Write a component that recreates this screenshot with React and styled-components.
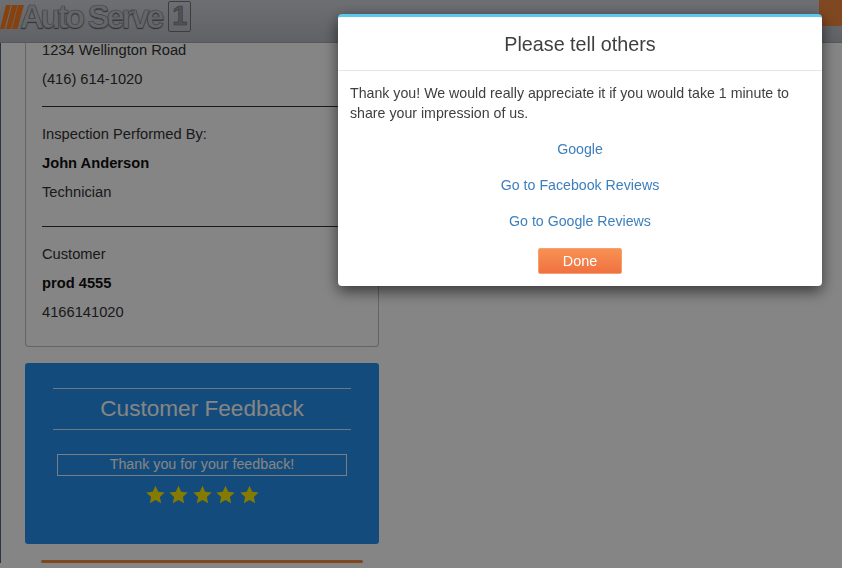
import React from "react";
import styled, { createGlobalStyle } from "styled-components";

const GlobalStyle = createGlobalStyle`
  html, body {
    margin: 0;
    height: 100%;
    overflow: hidden;
    background: #fff;
    font-family: "Liberation Sans", Arial, sans-serif;
  }
  * {
    box-sizing: border-box;
  }
`;

const Shell = styled.div`
  height: 568px;
  overflow: hidden;
  display: flex;
  flex-direction: column;
`;

const Header = styled.header`
  flex: 0 0 43px;
  display: flex;
  justify-content: space-between;
  align-items: flex-start;
  background: linear-gradient(#d3d5db, #b8bbc4);
  border-bottom: 1px solid #a8a8a8;
`;

const Logo = styled.div`
  display: flex;
  align-items: center;
  height: 32px;
  padding-top: 2px;
`;

const LogoText = styled.span`
  font-size: 33px;
  font-weight: 700;
  letter-spacing: -3.3px;
  line-height: 32px;
  margin: 0 7px 0 -4px;
  color: #c2c4c9;
  -webkit-text-stroke: 0.6px #7d7f85;
  text-shadow: 0 1px 1px #55575c;
  white-space: nowrap;
`;

const LogoBadge = styled.span`
  width: 23px;
  height: 31px;
  margin-top: -1px;
  border: 1.5px solid #74767c;
  border-radius: 2px;
  font-size: 27px;
  font-weight: 700;
  line-height: 29px;
  text-align: center;
  color: #9a9ca2;
  -webkit-text-stroke: 0.6px #6c6e74;
`;

const HeaderTab = styled.div`
  width: 23px;
  height: 26px;
  background: #f48a3e;
`;

const Content = styled.main`
  flex: 1;
  display: flex;
  align-items: flex-start;
`;

const Rail = styled.div`
  flex: 0 0 1px;
  height: 520px;
  background: #556488;
`;

const Column = styled.div`
  width: 354px;
  margin-left: 24px;
`;

const InfoCard = styled.section`
  height: 304px;
  padding: 0 16px;
  border: 1px solid #c0c0c0;
  border-top: 0;
  border-radius: 0 0 4px 4px;
`;

const InfoLine = styled.p`
  margin: 0;
  height: 29px;
  font-size: 14.7px;
  font-weight: ${(p) => (p.$bold ? 700 : 400)};
  color: ${(p) => (p.$bold ? "#111" : "#333")};
  line-height: 14px;
`;

const InfoRule = styled.hr`
  border: 0;
  border-top: 1px solid #333;
  margin: ${(p) => p.$top}px 0 ${(p) => p.$bottom}px;
`;

const FeedbackCard = styled.section`
  height: 181px;
  margin-top: 16px;
  padding: 25px 28px 0;
  background: #2590ed;
  border-radius: 3px;
  color: #fff;
  text-align: center;
`;

const FeedbackTitle = styled.h2`
  margin: 0;
  height: 42px;
  border-top: 1px solid #cfe6fb;
  border-bottom: 1px solid #cfe6fb;
  font-size: 22.6px;
  font-weight: 400;
  line-height: 40px;
`;

const FeedbackNote = styled.div`
  height: 22px;
  margin: 24px 4px 0;
  border: 1px solid #e4f1fd;
  font-size: 14.25px;
  line-height: 19px;
`;

const Stars = styled.div`
  display: flex;
  justify-content: center;
  gap: 4.5px;
  margin-top: 9px;
`;

const OrangeBar = styled.div`
  height: 3px;
  margin: 16px 16px 0;
  background: #f48a3e;
  border-radius: 2px;
`;

const Overlay = styled.div`
  position: fixed;
  inset: 0;
  background: rgba(0, 0, 0, 0.48);
`;

const Modal = styled.div`
  position: fixed;
  top: 14px;
  left: 338px;
  width: 484px;
  height: 272px;
  background: #fff;
  border-top: 3px solid #5bc8ee;
  border-radius: 4px;
  box-shadow: 0 5px 15px rgba(0, 0, 0, 0.6);
  color: #3f3f3f;
`;

const ModalHead = styled.div`
  height: 54px;
  border-bottom: 1px solid #e5e5e5;
  text-align: center;
  font-size: 19.75px;
  line-height: 55px;
`;

const ModalBody = styled.div`
  padding: 12px;
  font-size: 14.2px;
  line-height: 20px;
`;

const ModalLinks = styled.div`
  display: flex;
  flex-direction: column;
  align-items: center;
  gap: 16px;
  margin-top: 16px;
`;

const ModalLink = styled.a`
  color: #3d7fbd;
  line-height: 20px;
  text-decoration: none;
`;

const DoneButton = styled.button`
  display: block;
  width: 84px;
  height: 26px;
  margin: 17px auto 0;
  padding: 0;
  background: linear-gradient(#f89153, #ef7241);
  border: 1px solid #f7a06c;
  border-radius: 2px;
  color: #fff;
  font-family: inherit;
  font-size: 14.4px;
`;

function Star() {
  return (
    <svg width="19" height="19" viewBox="0 0 24 24" fill="#ffeb00">
      <path d="M12 1l3.4 7.6 8.2.9-6.1 5.5 1.7 8.1L12 19l-7.2 4.1 1.7-8.1L.4 9.500l8.200-.9z" />
    </svg>
  );
}

function App() {
  return (
    <Shell>
      <GlobalStyle />
      <Header>
        <Logo>
          <svg width="24" height="24" viewBox="0 0 24 24">
            <path d="M6 0h5L4.500 24H0zM12 0h5.500L11 24H6zM18 0h6L17.500 24H12z" fill="#ff7d1c" />
          </svg>
          <LogoText>Auto Serve</LogoText>
          <LogoBadge>1</LogoBadge>
        </Logo>
        <HeaderTab />
      </Header>
      <Content>
        <Rail />
        <Column>
          <InfoCard>
            <InfoLine>1234 Wellington Road</InfoLine>
            <InfoLine>(416) 614-1020</InfoLine>
            <InfoRule $top={5} $bottom={20} />
            <InfoLine>Inspection Performed By:</InfoLine>
            <InfoLine $bold>John Anderson</InfoLine>
            <InfoLine>Technician</InfoLine>
            <InfoRule $top={12} $bottom={20} />
            <InfoLine>Customer</InfoLine>
            <InfoLine $bold>prod 4555</InfoLine>
            <InfoLine>4166141020</InfoLine>
          </InfoCard>
          <FeedbackCard>
            <FeedbackTitle>Customer Feedback</FeedbackTitle>
            <FeedbackNote>Thank you for your feedback!</FeedbackNote>
            <Stars>
              <Star />
              <Star />
              <Star />
              <Star />
              <Star />
            </Stars>
          </FeedbackCard>
          <OrangeBar />
        </Column>
      </Content>
      <Overlay />
      <Modal>
        <ModalHead>Please tell others</ModalHead>
        <ModalBody>
          Thank you! We would really appreciate it if you would take 1 minute to
          share your impression of us.
          <ModalLinks>
            <ModalLink href="#">Google</ModalLink>
            <ModalLink href="#">Go to Facebook Reviews</ModalLink>
            <ModalLink href="#">Go to Google Reviews</ModalLink>
          </ModalLinks>
          <DoneButton>Done</DoneButton>
        </ModalBody>
      </Modal>
    </Shell>
  );
}

export default App;
